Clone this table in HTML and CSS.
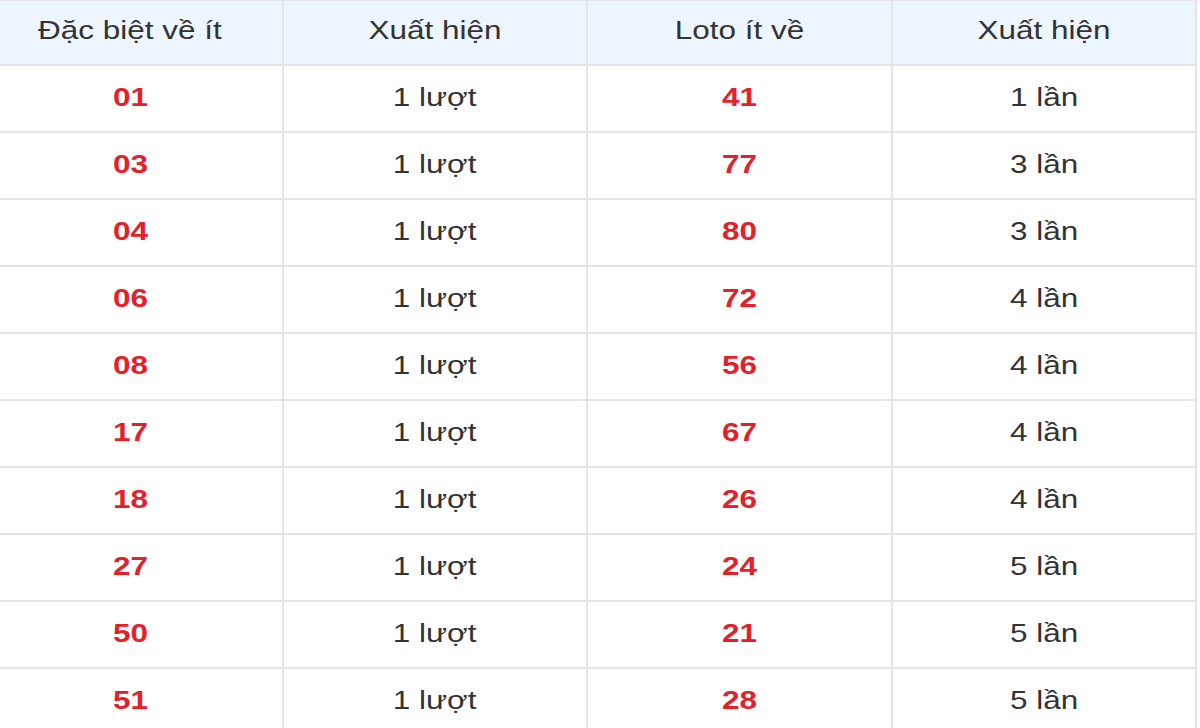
FILE: index.html
```html
<!DOCTYPE html>
<html lang="vi">
<head>
<meta charset="utf-8">
<title>Thống kê</title>
<link rel="stylesheet" href="styles.css">
</head>
<body>
<table class="stats">
  <thead>
    <tr><th><span class="t">Đặc biệt về ít</span></th><th><span class="t">Xuất hiện</span></th><th><span class="t">Loto ít về</span></th><th><span class="t">Xuất hiện</span></th></tr>
  </thead>
  <tbody>
    <tr><td class="num"><span class="t">01</span></td><td><span class="t">1 lượt</span></td><td class="num"><span class="t">41</span></td><td><span class="t">1 lần</span></td></tr>
    <tr><td class="num"><span class="t">03</span></td><td><span class="t">1 lượt</span></td><td class="num"><span class="t">77</span></td><td><span class="t">3 lần</span></td></tr>
    <tr><td class="num"><span class="t">04</span></td><td><span class="t">1 lượt</span></td><td class="num"><span class="t">80</span></td><td><span class="t">3 lần</span></td></tr>
    <tr><td class="num"><span class="t">06</span></td><td><span class="t">1 lượt</span></td><td class="num"><span class="t">72</span></td><td><span class="t">4 lần</span></td></tr>
    <tr><td class="num"><span class="t">08</span></td><td><span class="t">1 lượt</span></td><td class="num"><span class="t">56</span></td><td><span class="t">4 lần</span></td></tr>
    <tr><td class="num"><span class="t">17</span></td><td><span class="t">1 lượt</span></td><td class="num"><span class="t">67</span></td><td><span class="t">4 lần</span></td></tr>
    <tr><td class="num"><span class="t">18</span></td><td><span class="t">1 lượt</span></td><td class="num"><span class="t">26</span></td><td><span class="t">4 lần</span></td></tr>
    <tr><td class="num"><span class="t">27</span></td><td><span class="t">1 lượt</span></td><td class="num"><span class="t">24</span></td><td><span class="t">5 lần</span></td></tr>
    <tr><td class="num"><span class="t">50</span></td><td><span class="t">1 lượt</span></td><td class="num"><span class="t">21</span></td><td><span class="t">5 lần</span></td></tr>
    <tr><td class="num"><span class="t">51</span></td><td><span class="t">1 lượt</span></td><td class="num"><span class="t">28</span></td><td><span class="t">5 lần</span></td></tr>
  </tbody>
</table>
</body>
</html>
```
FILE: styles.css
```css
html, body {
  margin: 0;
  padding: 0;
  background: #ffffff;
  overflow: hidden;
}
body {
  width: 1200px;
  height: 728px;
  font-family: "Liberation Sans", Arial, sans-serif;
  color: #333333;
}
.stats {
  border-collapse: collapse;
  table-layout: fixed;
  width: 1220px;
  margin-left: -23px;
  margin-top: -1px;
}
.stats th,
.stats td {
  border: 2px solid #e3e5e8;
  height: 63px;
  padding: 0 0 2px 0;
  text-align: center;
  vertical-align: middle;
  font-size: 26px;
  font-weight: normal;
  color: #333333;
}
.stats th {
  height: 58px;
  padding-bottom: 5px;
  background: #edf5fe;
}
.stats td.num {
  color: #e3212b;
  font-weight: bold;
}
.stats .t {
  display: inline-block;
  transform: scaleX(1.21);
}
```
